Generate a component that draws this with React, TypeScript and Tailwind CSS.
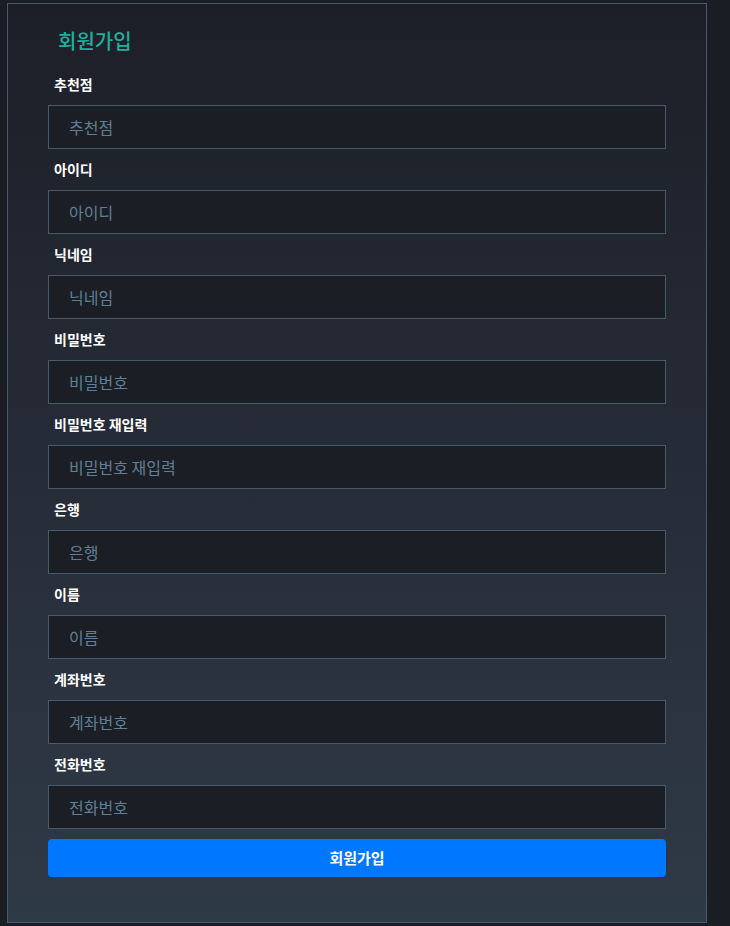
const fields = [
  '추천점',
  '아이디',
  '닉네임',
  '비밀번호',
  '비밀번호 재입력',
  '은행',
  '이름',
  '계좌번호',
  '전화번호',
];

export default function App() {
  return (
    <div
      className="min-h-[926px] bg-[#1b1d24] pl-[7px] pt-[3px]"
      style={{ fontFamily: '"Noto Sans CJK KR", "Noto Sans", sans-serif' }}
    >
      <div className="w-[700px] h-[920px] border border-[#475a6c] bg-gradient-to-b from-[#1d1f28] to-[#2f3a47] px-10">
        <h1 className="mt-[23px] ml-[10px] text-[20px] leading-[28px] font-medium text-[#20ae9e]">회원가입</h1>
        <form className="pt-[9px]" onSubmit={(e) => e.preventDefault()}>
          {fields.map((f) => (
            <div key={f}>
              <label className="block mt-[10px] mb-[10px] ml-[6px] text-[14px] leading-[21px] font-bold text-white">
                {f}
              </label>
              <input
                placeholder={f}
                className="block w-full h-[44px] border border-[#475a6c] bg-[#1c1e26] px-5 text-[16px] text-white placeholder:text-[#5f8097] outline-none"
              />
            </div>
          ))}
          <button
            type="submit"
            className="mt-[10px] w-full h-[38px] rounded bg-[#0077ff] text-[15px] font-bold text-white"
          >
            회원가입
          </button>
        </form>
      </div>
    </div>
  );
}
